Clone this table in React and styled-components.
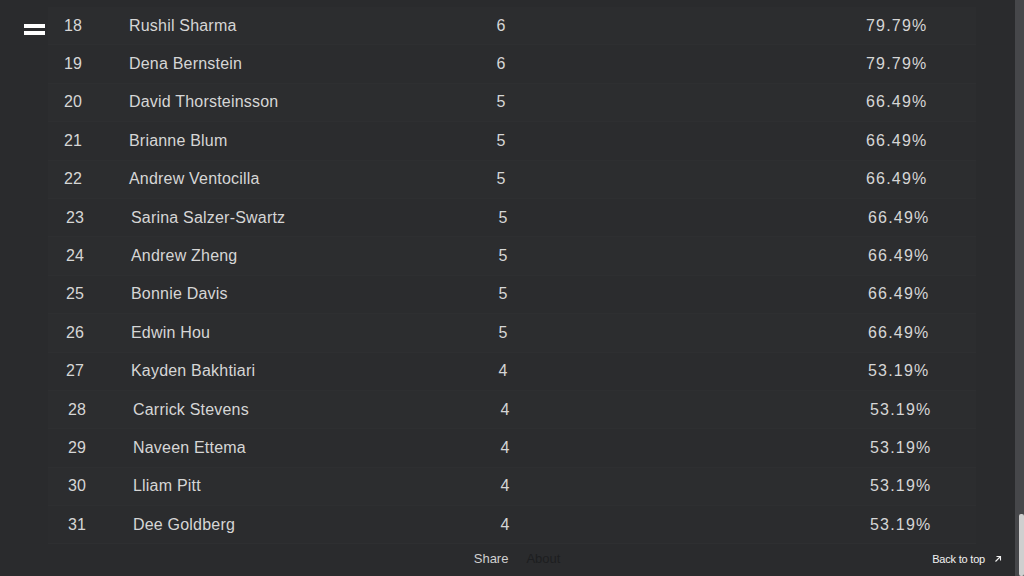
import styled, { createGlobalStyle } from "styled-components"

const GlobalStyle = createGlobalStyle`
    html, body {
        margin: 0;
        padding: 0;
        height: 100%;
        background: #2a2b2d;
        overflow: hidden;
    }
    #root {
        height: 100%;
    }
`

const Page = styled.div`
    display: flex;
    height: 576px;
    width: 1024px;
    background: #2a2b2d;
    font-family: "Liberation Sans", Arial, Helvetica, sans-serif;
    color: #d6d6d6;
`

const Main = styled.div`
    flex: 1;
    display: flex;
    flex-direction: column;
    min-width: 0;
`

const MenuButton = styled.button`
    position: fixed;
    top: 24px;
    left: 24px;
    width: 21px;
    height: 11px;
    padding: 0;
    border: none;
    background: transparent;
    display: flex;
    flex-direction: column;
    justify-content: space-between;
    cursor: pointer;

    span {
        display: block;
        height: 4px;
        width: 100%;
        background: #ffffff;
    }
`

const Table = styled.div`
    margin: 7px 39px 0 48px;
    display: flex;
    flex-direction: column;
`

const Row = styled.div`
    display: grid;
    grid-template-columns: 65px 340px 64px 333px 1fr;
    align-items: center;
    height: 38.4px;
    box-sizing: border-box;
    padding-left: ${props => 16 + props.$shift}px;
    background: ${props => props.$odd ? "#2b2c2e" : "#2c2d2f"};
    border-bottom: 1px solid #2e2f31;
    font-size: 16px;
    letter-spacing: 0.2px;
`

const Rank = styled.span`
    grid-column: 1;
`

const Name = styled.span`
    grid-column: 2;
`

const Count = styled.span`
    grid-column: 3;
    text-align: center;
`

const Percent = styled.span`
    grid-column: 5;
    letter-spacing: 1.2px;
`

const Footer = styled.div`
    flex: 1;
    display: flex;
    align-items: center;
    padding: 0 13px 0 0;
    font-size: 13px;
`

const FooterLinks = styled.div`
    flex: 1;
    display: flex;
    justify-content: center;
    gap: 18px;
    padding-left: 102px;
    margin-top: -4px;
`

const FooterLink = styled.a`
    color: ${props => props.$dim ? "#1d1e20" : "#d0d0d0"};
    text-decoration: none;
`

const BackToTop = styled.a`
    display: flex;
    align-items: center;
    gap: 9px;
    font-size: 11px;
    color: #f2f2f2;
    text-decoration: none;
    margin-top: -2px;
    letter-spacing: -0.2px;
`

const ScrollTrack = styled.div`
    width: 9px;
    background: #46474a;
    display: flex;
    flex-direction: column;
    justify-content: flex-end;
    align-items: center;
`

const ScrollThumb = styled.div`
    width: 5px;
    height: 62px;
    margin-left: 4px;
    border-radius: 2px;
    background: #cfcfcf;
`

const rows = [
    [18, "Rushil Sharma", 6, "79.79%"],
    [19, "Dena Bernstein", 6, "79.79%"],
    [20, "David Thorsteinsson", 5, "66.49%"],
    [21, "Brianne Blum", 5, "66.49%"],
    [22, "Andrew Ventocilla", 5, "66.49%"],
    [23, "Sarina Salzer-Swartz", 5, "66.49%"],
    [24, "Andrew Zheng", 5, "66.49%"],
    [25, "Bonnie Davis", 5, "66.49%"],
    [26, "Edwin Hou", 5, "66.49%"],
    [27, "Kayden Bakhtiari", 4, "53.19%"],
    [28, "Carrick Stevens", 4, "53.19%"],
    [29, "Naveen Ettema", 4, "53.19%"],
    [30, "Lliam Pitt", 4, "53.19%"],
    [31, "Dee Goldberg", 4, "53.19%"],
]

const ArrowIcon = () => (
    <svg width="8" height="8" viewBox="0 0 8 8" fill="none" stroke="#f2f2f2" strokeWidth="1.1">
        <path d="M1.5 6.5 L6.5 1.5 M2.5 1.5 H6.5 V5.5" />
    </svg>
)

const App = () => {
    return (
        <Page>
            <GlobalStyle />
            <MenuButton aria-label="menu">
                <span />
                <span />
            </MenuButton>
            <Main>
                <Table>
                    {rows.map(([rank, name, count, pct], index) => (
                        <Row key={rank} $odd={index % 2 === 1} $shift={index < 5 ? 0 : index < 10 ? 2 : 4}>
                            <Rank>{rank}</Rank>
                            <Name>{name}</Name>
                            <Count>{count}</Count>
                            <Percent>{pct}</Percent>
                        </Row>
                    ))}
                </Table>
                <Footer>
                    <FooterLinks>
                        <FooterLink href="#">Share</FooterLink>
                        <FooterLink href="#" $dim>About</FooterLink>
                    </FooterLinks>
                    <BackToTop href="#">
                        Back to top
                        <ArrowIcon />
                    </BackToTop>
                </Footer>
            </Main>
            <ScrollTrack>
                <ScrollThumb />
            </ScrollTrack>
        </Page>
    )
}

export default App
